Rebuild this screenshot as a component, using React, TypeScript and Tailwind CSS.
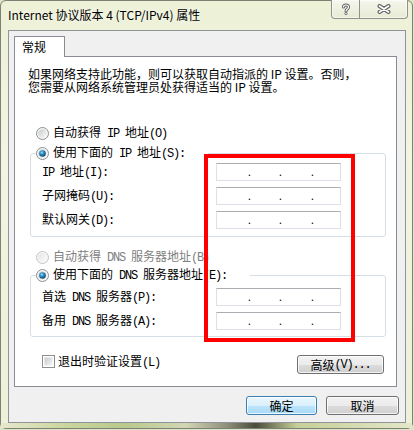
import React from "react";

function T({ s }: { s: string }) {
  const parts = s.split(/([\x20-\x7E]+)/);
  return (
    <>
      {parts.map((p, i) =>
        /[\x20-\x7E]/.test(p) ? (
          <span
            key={i}
            className="whitespace-pre [font-family:'Liberation_Mono',monospace] text-[12px] tracking-[-1.2px]"
          >
            {p}
          </span>
        ) : (
          <span key={i}>{p}</span>
        )
      )}
    </>
  );
}

function Radio({ checked, disabled }: { checked?: boolean; disabled?: boolean }) {
  return (
    <svg width="13" height="13" viewBox="0 0 13 13" className="shrink-0">
      <defs>
        <linearGradient id="rin" x1="0" y1="0" x2="1" y2="1">
          <stop offset="0" stopColor="#c9cbce" />
          <stop offset="1" stopColor="#fafafa" />
        </linearGradient>
        <linearGradient id="rind" x1="0" y1="0" x2="1" y2="1">
          <stop offset="0" stopColor="#e4e5e6" />
          <stop offset="1" stopColor="#fbfbfb" />
        </linearGradient>
        <radialGradient id="rdot" cx="0.4" cy="0.35" r="0.7">
          <stop offset="0" stopColor="#8fe0f7" />
          <stop offset="0.45" stopColor="#2a86bd" />
          <stop offset="1" stopColor="#0c3f66" />
        </radialGradient>
      </defs>
      <circle
        cx="6.5"
        cy="6.5"
        r="6"
        fill="#f6f6f6"
        stroke={disabled ? "#c2c4c6" : "#8c8e90"}
      />
      <circle cx="6.5" cy="6.5" r="4.3" fill={disabled ? "url(#rind)" : "url(#rin)"} />
      {checked && <circle cx="6.5" cy="6.5" r="3.3" fill="url(#rdot)" />}
    </svg>
  );
}

function Check() {
  return (
    <svg width="13" height="13" viewBox="0 0 13 13" className="shrink-0">
      <defs>
        <linearGradient id="cin" x1="0" y1="0" x2="1" y2="1">
          <stop offset="0" stopColor="#c6c9ce" />
          <stop offset="1" stopColor="#f7f7f7" />
        </linearGradient>
      </defs>
      <rect x="0.5" y="0.5" width="12" height="12" fill="#fff" stroke="#8e8f8f" />
      <rect x="2.5" y="2.5" width="8" height="8" fill="url(#cin)" />
    </svg>
  );
}

function IpBox() {
  return (
    <div className="flex h-[18px] w-[125px] border border-[#dde1e7] border-t-[#abadb3] bg-white text-[12px] leading-[16px] [font-family:'Liberation_Sans',sans-serif]">
      <span className="w-[31px]" />
      <span className="flex w-[3px] justify-center">.</span>
      <span className="w-[28px]" />
      <span className="flex w-[3px] justify-center">.</span>
      <span className="w-[29px]" />
      <span className="flex w-[3px] justify-center">.</span>
    </div>
  );
}

function Row({ label }: { label: string }) {
  return (
    <div className="flex h-[18px] items-center">
      <div className="w-[180px] pl-[6px] leading-[14px]">
        <T s={label} />
      </div>
      <IpBox />
    </div>
  );
}

function Btn({
  children,
  w,
  primary,
}: {
  children: React.ReactNode;
  w: string;
  primary?: boolean;
}) {
  return (
    <div
      className={
        "flex h-[19px] items-center justify-center rounded-[3px] border text-[12px] leading-none shadow-[inset_0_0_0_1px_rgba(255,255,255,0.75)] " +
        w +
        (primary
          ? " border-[#3c7fb1] bg-[linear-gradient(#eaf6fd_0%,#d9f0fc_50%,#bee6fd_50%,#a7d9f5_100%)]"
          : " border-[#707070] bg-[linear-gradient(#f2f2f2_0%,#ebebeb_50%,#dddddd_50%,#cfcfcf_100%)]")
      }
    >
      {children}
    </div>
  );
}

export default function App() {
  return (
    <div className="relative h-[430px] w-[414px] overflow-hidden bg-[#dfe4c6] text-[12px] text-black [font-family:'Noto_Sans_CJK_SC',sans-serif]">
      <div className="flex h-[429px] w-[413px] flex-col rounded-[6px] border border-[#7d8276] bg-[linear-gradient(180deg,#edf1d6_0%,#f3f4e2_35%,#eff0d9_100%)]">
        {/* title bar */}
        <div className="flex h-[29px] items-start justify-between">
          <div className="pl-[7px] pt-[6px] leading-[16px] [text-shadow:0_0_6px_#fff]">
            Internet 协议版本 4 (TCP/IPv4) 属性
          </div>
          <div className="mr-[4px] -mt-px flex h-[19px] rounded-b-[4px] border border-t-0 border-[#8e9389] bg-[linear-gradient(#f6f7ee,#e7ead4)] shadow-[inset_0_0_0_1px_rgba(255,255,255,0.6)]">
            <div className="flex w-[28px] items-center justify-center border-r border-[#8e9389]">
              <svg width="10" height="12" viewBox="0 0 10 12">
                <path
                  d="M2.5 4 C2.5 1.3 7.5 1.3 7.5 4 C7.5 6 5 6 5 8"
                  fill="none"
                  stroke="#616161"
                  strokeWidth="3"
                  strokeLinecap="round"
                />
                <path
                  d="M2.5 4 C2.5 1.3 7.5 1.3 7.5 4 C7.5 6 5 6 5 8"
                  fill="none"
                  stroke="#fff"
                  strokeWidth="1.2"
                  strokeLinecap="round"
                />
                <circle cx="5" cy="10.6" r="1.2" fill="#fff" stroke="#616161" strokeWidth="0.9" />
              </svg>
            </div>
            <div className="flex w-[47px] items-center justify-center">
              <svg width="14" height="10" viewBox="0 0 14 10">
                <path d="M2.5 2 L11.5 8 M11.5 2 L2.5 8" stroke="#616161" strokeWidth="4" strokeLinecap="round" />
                <path d="M2.5 2 L11.5 8 M11.5 2 L2.5 8" stroke="#fff" strokeWidth="1.8" strokeLinecap="round" />
              </svg>
            </div>
          </div>
        </div>

        {/* client area */}
        <div className="ml-[7px] h-[393px] w-[398px] border border-[#8f949a] bg-[#f0f0f0]">
          <div className="ml-[5px] mt-[5px] w-[383px]">
            <div className="flex">
              <div className="relative z-10 -mb-px h-[21px] w-[51px] border border-b-0 border-[#898c95] bg-white pl-[7px] leading-[20px]">
                常规
              </div>
            </div>
            <div className="h-[331px] border border-[#898c95] bg-white">
              <div className="pl-[13px] pt-[10px] leading-[13px]">
                <p>如果网络支持此功能，则可以获取自动指派的 IP 设置。否则，</p>
                <p>您需要从网络系统管理员处获得适当的 IP 设置。</p>
              </div>

              <div className="mt-[33px] flex h-[14px] items-center gap-[4px] pl-[21px]">
                <Radio />
                <span className="leading-[14px]">
                  <T s="自动获得 IP 地址(O)" />
                </span>
              </div>

              <fieldset className="ml-[15px] mt-[6px] w-[356px] rounded-[3px] border border-[#d5dfe5] pb-[7px] pl-[5px]">
                <legend className="flex h-[14px] w-[172px] items-center gap-[4px]">
                  <Radio checked />
                  <span className="leading-[14px]">
                    <T s="使用下面的 IP 地址(S):" />
                  </span>
                </legend>
                <div className="mt-[3px] flex flex-col gap-[6px]">
                  <Row label="IP 地址(I):" />
                  <Row label="子网掩码(U):" />
                  <Row label="默认网关(D):" />
                </div>
              </fieldset>

              <div className="mt-[13px] flex h-[14px] items-center gap-[4px] pl-[21px] text-[#808080]">
                <Radio disabled />
                <span className="leading-[14px]">
                  <T s="自动获得 DNS 服务器地址(B)" />
                </span>
              </div>

              <fieldset className="ml-[15px] mt-[4px] w-[356px] rounded-[3px] border border-[#d5dfe5] pb-[6px] pl-[5px]">
                <legend className="flex h-[14px] w-[214px] items-center gap-[4px]">
                  <Radio checked />
                  <span className="leading-[14px]">
                    <T s="使用下面的 DNS 服务器地址(E):" />
                  </span>
                </legend>
                <div className="mt-[6px] flex flex-col gap-[6px]">
                  <Row label="首选 DNS 服务器(P):" />
                  <Row label="备用 DNS 服务器(A):" />
                </div>
              </fieldset>

              <div className="mt-[18px] flex items-start justify-between pl-[27px] pr-[12px]">
                <div className="flex h-[13px] items-center gap-[3px]">
                  <Check />
                  <span className="leading-[13px]">
                    <T s="退出时验证设置(L)" />
                  </span>
                </div>
                <Btn w="w-[87px]">
                  <T s="高级(V)..." />
                </Btn>
              </div>
            </div>
          </div>

          <div className="mt-[9px] flex justify-end gap-[9px] pr-[6px]">
            <Btn w="w-[71px]" primary>
              确定
            </Btn>
            <Btn w="w-[73px]">取消</Btn>
          </div>
        </div>

        <div className="mt-auto h-[5px] bg-[linear-gradient(90deg,#e6e8cc_0%,#cbd6a0_15%,#b8c98c_30%,#d2d6b4_45%,#8d8f78_55%,#4a4c3c_62%,#c5cf98_72%,#e4e7c8_100%)]" />
      </div>

      {/* red annotation frame */}
      <div className="absolute left-[204px] top-[154px] h-[188px] w-[151px] border-4 border-[#ff0000]" />
    </div>
  );
}
